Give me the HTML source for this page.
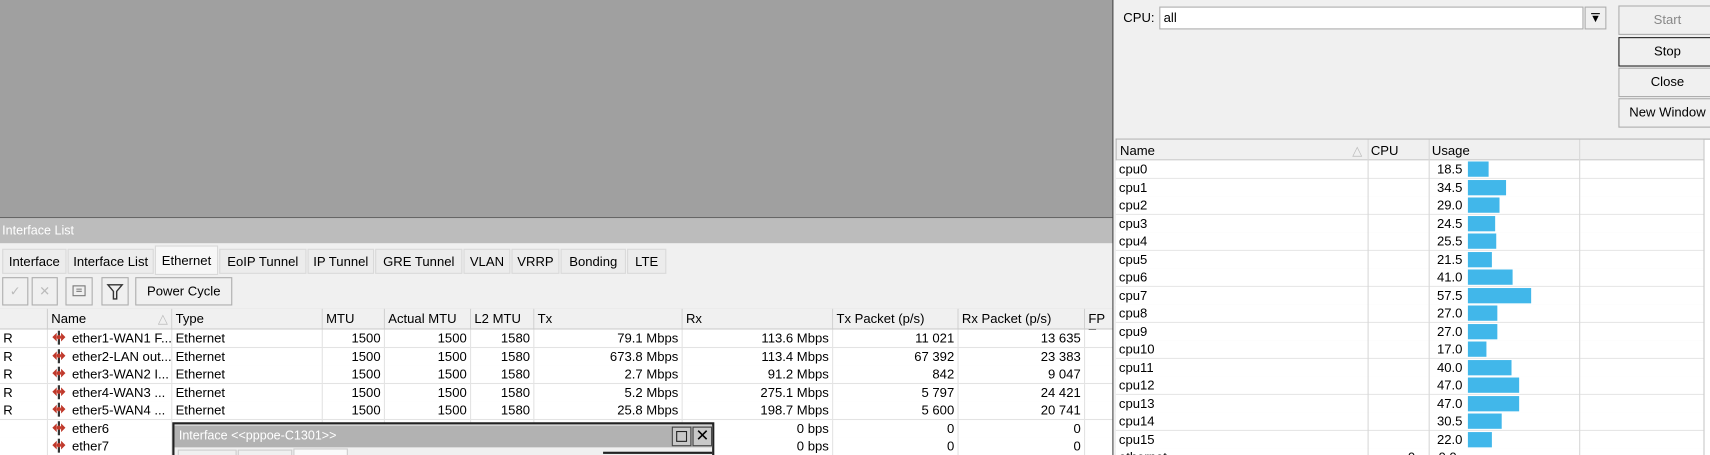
<!DOCTYPE html>
<html><head><meta charset="utf-8"><style>
*{box-sizing:border-box;margin:0;padding:0}
html,body{width:1710px;height:455px;overflow:hidden;background:#f0f0f0}
#w{position:absolute;left:0;top:0;width:1568px;height:417px;transform:scale(1.09056,1.0911);transform-origin:0 0;font-family:"Liberation Sans",sans-serif;font-size:12px;color:#000;overflow:hidden}
.a{position:absolute;white-space:nowrap}
.r{text-align:right}
.bd{border:1px solid #adadad}
.tab{position:absolute;top:228px;height:23px;border:1px solid #d9d9d9;background:#ececec;padding:4px 0 0;text-align:center}
.tb{position:absolute;top:254px;height:26px;border:1px solid #adadad;background:#f0f0f0}
.hc{position:absolute;top:283px;height:18px;border-right:1px solid #d0d0d0;padding:2px 3px;background:#f0f0f0}
.row{position:absolute;left:0;width:1020px;height:17px;border-bottom:1px solid #e3e3e3;background:#fff}
.c{position:absolute;top:0px;height:16px;line-height:16px;border-right:1px solid #e3e3e3;padding:0 3px;white-space:nowrap;overflow:hidden}
.btn{position:absolute;left:1484px;width:90px;height:27px;border:1px solid #adadad;background:#f0f0f0;text-align:center;line-height:25px}
.crow{position:absolute;left:1023px;width:539px;height:17px;border-bottom:1px solid #e6e6e6;background:#fff}
.bar{position:absolute;left:323px;top:1px;height:14px;background:#41b7ea}
</style></head><body><div id="w">
<div class="a" style="left:0;top:0;width:1021px;height:199px;background:#a0a0a0"></div>
<div class="a" style="left:0;top:199px;width:1021px;height:1px;background:#555"></div>
<div class="a" style="left:0;top:200px;width:1021px;height:23px;background:#bcbcbc;color:#fff;padding:6px 2px 0;font-size:11.5px">Interface List</div>
<div class="a" style="left:0;top:223px;width:1021px;height:194px;background:#f0f0f0"></div>
<div class="tab" style="left:2px;width:59px">Interface</div>
<div class="tab" style="left:62px;width:79px">Interface List</div>
<div class="tab" style="left:142px;width:58px;top:225px;height:27px;background:#f7f7f7;padding-top:6px">Ethernet</div>
<div class="tab" style="left:201px;width:80px">EoIP Tunnel</div>
<div class="tab" style="left:282px;width:61px">IP Tunnel</div>
<div class="tab" style="left:344px;width:80px">GRE Tunnel</div>
<div class="tab" style="left:425px;width:43px">VLAN</div>
<div class="tab" style="left:469px;width:44px">VRRP</div>
<div class="tab" style="left:514px;width:60px">Bonding</div>
<div class="tab" style="left:575px;width:36px">LTE</div>
<div class="tb" style="left:2px;width:24px;color:#bbb;text-align:center;line-height:24px">✓</div>
<div class="tb" style="left:29px;width:24px;color:#bbb;text-align:center;line-height:24px">✕</div>
<div class="tb" style="left:60px;width:25px"><svg width="23" height="24"><rect x="6" y="7" width="11" height="9" fill="none" stroke="#777"/><path d="M9 10h5M9 12h5" stroke="#777"/></svg></div>
<div class="tb" style="left:93px;width:25px"><svg width="23" height="24"><path d="M5 6h13l-5 6v7h-3v-7z" fill="none" stroke="#333" stroke-width="1.3"/></svg></div>
<div class="tb" style="left:124px;width:89px;text-align:center;line-height:24px">Power Cycle</div>
<div class="a" style="left:0;top:283px;width:1021px;height:19px;background:#f0f0f0;border-top:1px solid #c8c8c8;border-bottom:1px solid #c8c8c8"></div>
<div class="hc" style="left:0;width:44px"></div>
<div class="hc" style="left:44px;width:114px">Name<span style="float:right;color:#bbb">△</span></div>
<div class="hc" style="left:158px;width:138px">Type</div>
<div class="hc" style="left:296px;width:57px">MTU</div>
<div class="hc" style="left:353px;width:79px">Actual MTU</div>
<div class="hc" style="left:432px;width:58px">L2 MTU</div>
<div class="hc" style="left:490px;width:136px">Tx</div>
<div class="hc" style="left:626px;width:138px">Rx</div>
<div class="hc" style="left:764px;width:115px">Tx Packet (p/s)</div>
<div class="hc" style="left:879px;width:116px">Rx Packet (p/s)</div>
<div class="hc" style="left:995px;width:30px">FP T</div>
<svg width="0" height="0" style="position:absolute"><defs><g id="ic"><path d="M1 6l4-4v8zM13 6l-4-4v8z" fill="#c0392b"/><rect x="6" y="0" width="2" height="13" fill="#333"/><circle cx="7" cy="6" r="2" fill="#c0392b"/></g></defs></svg>
<div id="rows"></div>
<div class="a" style="left:158px;top:387px;width:497px;height:40px;border:2px solid #222;background:#f0f0f0"></div>
<div class="a" style="left:160px;top:390px;width:493px;height:20px;background:#b2b2b2;color:#fff;padding:4px 4px 0;font-size:11.5px">Interface &lt;&lt;pppoe-C1301&gt;&gt;</div>
<div class="a" style="left:616px;top:391px;width:18px;height:18px;border:1px solid #444;background:#c8c8c8"><div style="margin:3px;width:10px;height:10px;border:1px solid #222"></div></div>
<div class="a" style="left:635px;top:391px;width:18px;height:18px;border:1px solid #444;background:#c8c8c8;text-align:center;line-height:16px;font-size:15px">✕</div>
<div class="a" style="left:163px;top:412px;width:54px;height:8px;border:1px solid #ccc"></div>
<div class="a" style="left:218px;top:412px;width:50px;height:8px;border:1px solid #ccc"></div>
<div class="a" style="left:269px;top:411px;width:50px;height:8px;border:1px solid #ccc;background:#fafafa"></div>
<div class="a" style="left:553px;top:414px;width:100px;height:2px;background:#222"></div>
<div class="a" style="left:1020px;top:0;width:1px;height:417px;background:#444"></div>
<div class="a" style="left:1021px;top:0;width:547px;height:417px;background:#f0f0f0"></div>
<div class="a" style="left:1030px;top:9px">CPU:</div>
<div class="a bd" style="left:1063px;top:6px;width:389px;height:21px;background:#fff;padding:2px 3px">all</div>
<div class="a bd" style="left:1453px;top:6px;width:20px;height:21px;text-align:center;font-size:10px;line-height:21px">▼<div style="position:absolute;left:5px;top:5px;width:8px;height:1px;background:#000"></div></div>
<div class="btn" style="top:5px;color:#888">Start</div>
<div class="btn" style="top:34px;border-color:#222">Stop</div>
<div class="btn" style="top:62px">Close</div>
<div class="btn" style="top:90px">New Window</div>
<div class="a" style="left:1023px;top:127px;width:545px;height:290px;background:#fff;border-top:1px solid #adadad;border-left:1px solid #adadad"></div>
<div class="a" style="left:1024px;top:128px;width:538px;height:19px;background:#f0f0f0;border-bottom:1px solid #c8c8c8"></div>
<div class="a" style="left:1027px;top:131px">Name</div><div class="a" style="left:1240px;top:131px;color:#bbb">△</div>
<div id="cpus"></div>
<div class="a" style="left:1254px;top:128px;width:1px;height:289px;background:#d8d8d8"></div>
<div class="a" style="left:1257px;top:131px">CPU</div>
<div class="a" style="left:1310px;top:128px;width:1px;height:289px;background:#d8d8d8"></div>
<div class="a" style="left:1313px;top:131px">Usage</div>
<div class="a" style="left:1448px;top:128px;width:1px;height:289px;background:#d8d8d8"></div>
<div class="a" style="left:1562px;top:128px;width:1px;height:289px;background:#c8c8c8"></div>
</div>
<script>
var R=[["R","ether1-WAN1 F...","1500","1500","1580","79.1 Mbps","113.6 Mbps","11 021","13 635"],
["R","ether2-LAN out...","1500","1500","1580","673.8 Mbps","113.4 Mbps","67 392","23 383"],
["R","ether3-WAN2 I...","1500","1500","1580","2.7 Mbps","91.2 Mbps","842","9 047"],
["R","ether4-WAN3 ...","1500","1500","1580","5.2 Mbps","275.1 Mbps","5 797","24 421"],
["R","ether5-WAN4 ...","1500","1500","1580","25.8 Mbps","198.7 Mbps","5 600","20 741"],
["","ether6","","","","","0 bps","0","0"],["","ether7","","","","","0 bps","0","0"]];
var cols=[[0,44],[44,114],[158,138],[296,57],[353,79],[432,58],[490,136],[626,138],[764,115],[879,116],[995,30]];
var h="";
R.forEach(function(r,i){var t=302+i*16.5;h+='<div class="row" style="top:'+t+'px">';
var v=[r[0],r[1],i<5?"Ethernet":"",r[2],r[3],r[4],r[5],r[6],r[7],r[8],""];
for(var j=0;j<11;j++){var c=cols[j];var cont=v[j];
if(j==1)cont='<svg width="14" height="13" style="vertical-align:-2px;margin-right:5px"><use href="#ic"/></svg>'+cont;
h+='<div class="c'+(j>=3&&j<=9?' r':'')+'" style="left:'+c[0]+'px;width:'+c[1]+'px">'+cont+'</div>';}
h+='</div>';});
document.getElementById("rows").innerHTML=h;
var U=[18.5,34.5,29.0,24.5,25.5,21.5,41.0,57.5,27.0,27.0,17.0,40.0,47.0,47.0,30.5,22.0];
h="";U.forEach(function(u,i){var t=147+i*16.5;h+='<div class="crow" style="top:'+t+'px"><div class="a" style="left:3px;top:1px">cpu'+i+'</div><div class="a r" style="left:288px;width:30px;top:1px">'+u.toFixed(1)+'</div><div class="bar" style="width:'+Math.round(u)+'px"></div></div>';});
h+='<div class="crow" style="top:411px"><div class="a" style="left:3px;top:1px">ethernet</div><div class="a" style="left:268px;top:1px">0</div><div class="a" style="left:296px;top:1px">0.0</div></div>';
document.getElementById("cpus").innerHTML=h;
</script>
</body></html>
